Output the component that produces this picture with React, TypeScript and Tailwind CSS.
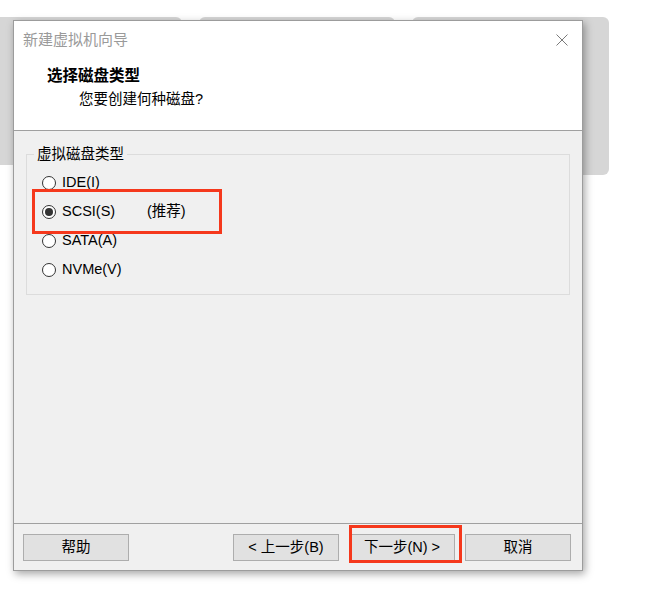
import React from "react";

const font = { fontFamily: '"Liberation Sans", "Noto Sans CJK SC", sans-serif' };

function Radio({ checked }: { checked?: boolean }) {
  return (
    <span className="flex h-[14px] w-[14px] shrink-0 items-center justify-center rounded-full border border-[#333333] bg-white">
      {checked && <span className="h-[8px] w-[8px] rounded-full bg-[#333333]" />}
    </span>
  );
}

function Btn({ children }: { children: React.ReactNode }) {
  return (
    <div className="flex h-[27px] w-[106px] items-center justify-center border border-[#adadad] bg-[#e1e1e1] text-[14.5px] text-black">
      {children}
    </div>
  );
}

export default function App() {
  return (
    <div className="relative h-[606px] w-[658px] overflow-hidden bg-white" style={font}>
      {/* background cards */}
      <div className="absolute left-[-20px] top-[17px] h-[148px] w-[202px] rounded-[6px] bg-[#d6d6d6]" />
      <div className="absolute left-[199px] top-[17px] h-[158px] w-[196px] rounded-[6px] bg-[#d6d6d6]" />
      <div className="absolute left-[412px] top-[17px] h-[158px] w-[197px] rounded-[6px] bg-[#d6d6d6]" />

      {/* dialog window */}
      <div className="absolute left-[13px] top-[20px] flex h-[551px] w-[570px] flex-col border border-[#9c9c9c] bg-[#f0f0f0] shadow-[2px_3px_8px_rgba(0,0,0,0.35)]">
        {/* header */}
        <div className="flex h-[110px] flex-col border-b border-[#a0a0a0] bg-white pl-[9px] pt-[9px]">
          <div className="flex h-[20px] items-center justify-between pr-[14px]">
            <span className="text-[15px] leading-[20px] text-[#9a9a9a]">新建虚拟机向导</span>
            <svg width="12" height="12" viewBox="0 0 12 12" className="block">
              <path d="M0.5 0.5 L11.5 11.5 M11.5 0.5 L0.5 11.5" stroke="#7a7a7a" strokeWidth="1" fill="none" />
            </svg>
          </div>
          <div className="mt-[16px] pl-[24px] text-[15.5px] font-bold leading-[20px] text-black">选择磁盘类型</div>
          <div className="mt-[3px] pl-[56px] text-[14.5px] leading-[20px] text-black">您要创建何种磁盘?</div>
        </div>

        {/* content */}
        <div className="flex-1 px-[12px] pt-[13px]">
          <fieldset className="border border-[#dcdcdc] pb-[10px] pt-[4px]">
            <legend className="ml-[7px] px-[3px] text-[14.5px] leading-[20px] text-black">虚拟磁盘类型</legend>
            <div className="flex flex-col pl-[15px] text-[14.5px] text-black">
              <div className="flex h-[29px] items-center gap-[6px]">
                <Radio />
                <span>IDE(I)</span>
              </div>
              <div className="flex h-[29px] items-center gap-[6px]">
                <Radio checked />
                <span className="w-[79px]">SCSI(S)</span>
                <span>(推荐)</span>
              </div>
              <div className="flex h-[29px] items-center gap-[6px]">
                <Radio />
                <span>SATA(A)</span>
              </div>
              <div className="flex h-[29px] items-center gap-[6px]">
                <Radio />
                <span>NVMe(V)</span>
              </div>
            </div>
          </fieldset>
        </div>

        {/* footer */}
        <div className="flex h-[47px] items-start justify-between border-t border-[#a0a0a0] pl-[9px] pr-[11px] pt-[10px]">
          <Btn>帮助</Btn>
          <div className="flex gap-[10px]">
            <Btn>&lt; 上一步(B)</Btn>
            <Btn>下一步(N) &gt;</Btn>
            <Btn>取消</Btn>
          </div>
        </div>
      </div>

      {/* annotation boxes */}
      <div className="absolute left-[32px] top-[189px] h-[45px] w-[190px] border-[3px] border-[#f5381c]" />
      <div className="absolute left-[349px] top-[525px] h-[38px] w-[113px] border-[3px] border-[#f5381c]" />
    </div>
  );
}
